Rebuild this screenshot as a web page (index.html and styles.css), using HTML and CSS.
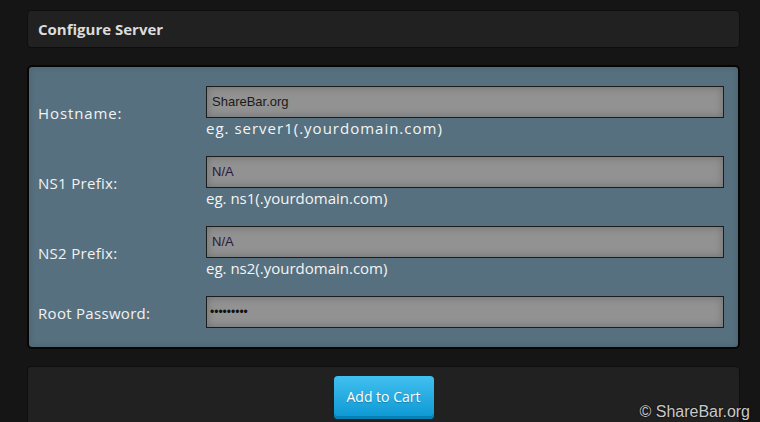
FILE: index.html
```html
<!DOCTYPE html>
<html>
<head>
<meta charset="utf-8">
<link rel="stylesheet" href="styles.css">
</head>
<body>
<div class="page">
  <div class="card head"><h1 class="title">Configure Server</h1></div>
  <div class="card form">
    <div class="row">
      <label class="label wide">Hostname:</label>
      <div class="field">
        <div class="input">ShareBar.org</div>
        <div class="hint wide">eg. server1(.yourdomain.com)</div>
      </div>
    </div>
    <div class="row">
      <label class="label">NS1 Prefix:</label>
      <div class="field">
        <div class="input na">N/A</div>
        <div class="hint">eg. ns1(.yourdomain.com)</div>
      </div>
    </div>
    <div class="row">
      <label class="label">NS2 Prefix:</label>
      <div class="field">
        <div class="input na">N/A</div>
        <div class="hint">eg. ns2(.yourdomain.com)</div>
      </div>
    </div>
    <div class="row">
      <label class="label">Root Password:</label>
      <div class="field">
        <div class="input pw">&#8226;&#8226;&#8226;&#8226;&#8226;&#8226;&#8226;&#8226;&#8226;</div>
      </div>
    </div>
  </div>
  <div class="card foot">
    <button class="btn">Add to Cart</button>
  </div>
</div>
<div class="mark">© ShareBar.org</div>
</body>
</html>
```

FILE: styles.css
```css
html, body {
  margin: 0;
  height: 100%;
  overflow: hidden;
}
body {
  background: #151515;
  font-family: "Open Sans", "Noto Sans", sans-serif;
  color: #eee;
  position: relative;
}
.page {
  padding: 10px 20px 0 27px;
  display: flex;
  flex-direction: column;
  gap: 17px;
}
.card {
  width: 713px;
  box-sizing: border-box;
  border-radius: 4px;
  flex-shrink: 0;
}
.head {
  height: 38px;
  background: #212121;
  border: 1px solid #0e0e0e;
  display: flex;
  align-items: center;
  padding-left: 10px;
}
.title {
  margin: 0;
  font-size: 15px;
  font-weight: 700;
  color: #dcdcdc;
}
.form {
  height: 284px;
  background: #56707f;
  border: 2px solid #050505;
  border-radius: 5px;
  box-shadow: inset 0 0 6px rgba(0,0,0,0.15);
  padding: 19px 14px 0 9px;
  display: flex;
  flex-direction: column;
  gap: 18px;
}
.row {
  display: flex;
  align-items: center;
}
.label {
  width: 168px;
  font-size: 15px;
  color: #f2f2f2;
  letter-spacing: 0.3px;
  padding-top: 2px;
}
.label.wide { letter-spacing: 0.9px; }
.field { flex: 1; }
.input {
  height: 32px;
  box-sizing: border-box;
  background: #929292;
  border: 1px solid #1c1c1c;
  box-shadow: inset 0 0 8px rgba(0,0,0,0.25);
  font-family: "Liberation Sans", Arial, sans-serif;
  font-size: 13px;
  line-height: 30px;
  padding-left: 5px;
  color: #1a1a1a;
}
.input.na { color: #2a1838; }
.input.pw { color: #111; font-size: 12px; padding-left: 3px; }
.hint {
  font-size: 15px;
  line-height: 20px;
  height: 20px;
  color: #f4f4f4;
}
.hint.wide { letter-spacing: 1px; }
.foot {
  height: 60px;
  background: #212121;
  border: 1px solid #0e0e0e;
  display: flex;
  justify-content: center;
  align-items: flex-start;
  padding-top: 9px;
}
.btn {
  width: 100px;
  height: 43px;
  border: none;
  border-radius: 4px;
  background: linear-gradient(#42c0f0, #0b97d3);
  box-shadow: inset 0 -3px 0 #0781b5;
  color: #fff;
  font-family: "Open Sans", "Noto Sans", sans-serif;
  font-size: 14px;
  padding: 0 0 3px;
  text-shadow: 0 1px 1px rgba(0,0,0,0.25);
}
.mark {
  position: absolute;
  right: 10px;
  bottom: 1px;
  font-family: "Liberation Sans", Arial, sans-serif;
  font-size: 16px;
  color: #c9c9c9;
  text-shadow: 0 0 2px #000;
}
```
